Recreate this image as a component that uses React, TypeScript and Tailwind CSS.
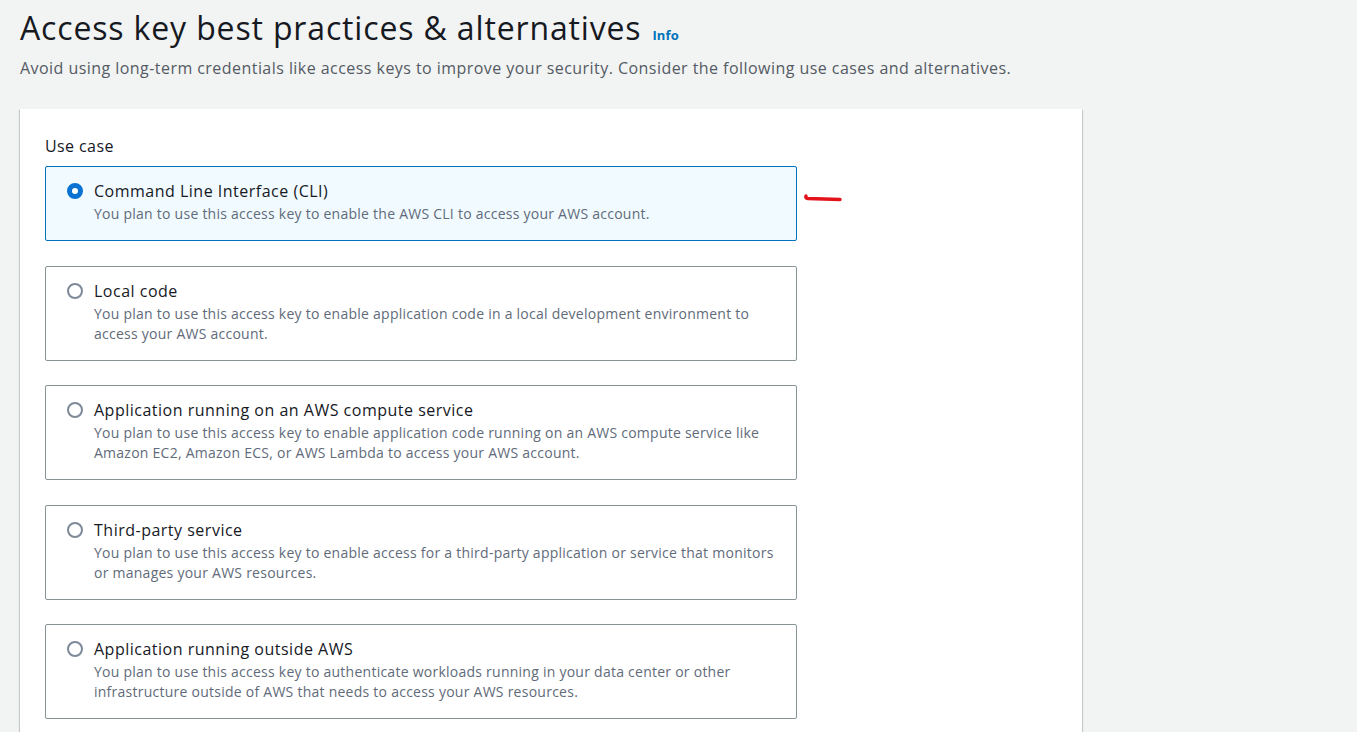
import { useState } from "react";

const options = [
  {
    id: "cli",
    title: "Command Line Interface (CLI)",
    desc: "You plan to use this access key to enable the AWS CLI to access your AWS account.",
  },
  {
    id: "local",
    title: "Local code",
    desc: "You plan to use this access key to enable application code in a local development environment to access your AWS account.",
  },
  {
    id: "compute",
    title: "Application running on an AWS compute service",
    desc: "You plan to use this access key to enable application code running on an AWS compute service like Amazon EC2, Amazon ECS, or AWS Lambda to access your AWS account.",
  },
  {
    id: "third",
    title: "Third-party service",
    desc: "You plan to use this access key to enable access for a third-party application or service that monitors or manages your AWS resources.",
  },
  {
    id: "outside",
    title: "Application running outside AWS",
    desc: "You plan to use this access key to authenticate workloads running in your data center or other infrastructure outside of AWS that needs to access your AWS resources.",
  },
];

function Radio({ checked }: { checked: boolean }) {
  return checked ? (
    <span className="mt-[3px] w-4 h-4 shrink-0 rounded-full border-[5px] border-[#0972d3] bg-white" />
  ) : (
    <span className="mt-[3px] w-4 h-4 shrink-0 rounded-full border-2 border-[#7d8998] bg-white" />
  );
}

export default function App() {
  const [selected, setSelected] = useState("cli");

  return (
    <div
      className="min-h-screen bg-[#f2f3f3] px-5 pt-[8px] text-[#16191f]"
      style={{ fontFamily: '"Open Sans", "Noto Sans", sans-serif' }}
    >
      <div className="flex items-end gap-[11px]">
        <h1 className="text-[32px] leading-[40px] font-normal tracking-[0.85px]">
          Access key best practices &amp; alternatives
        </h1>
        <a className="text-[13px] font-bold text-[#0073bb] mb-[3px] tracking-[0.1px]">Info</a>
      </div>
      <p className="mt-[9px] text-[16px] leading-[22px] text-[#545b64] tracking-[0.45px]">
        Avoid using long-term credentials like access keys to improve your security. Consider the following use cases and alternatives.
      </p>

      <div className="mt-[30px] w-[1062px] bg-white shadow-[0_1px_1px_0_rgba(0,28,36,0.3),1px_1px_1px_0_rgba(0,28,36,0.15),-1px_1px_1px_0_rgba(0,28,36,0.15)] px-[25px] pt-[26px] pb-6">
        <div className="text-[16px] leading-[22px] tracking-[0.4px]">Use case</div>
        <div className="relative mt-[9px] flex flex-col gap-[24.5px] w-[752px]">
          {options.map((o) => {
            const on = selected === o.id;
            return (
              <label
                key={o.id}
                onClick={() => setSelected(o.id)}
                className={
                  on
                    ? "flex gap-[11px] rounded-[2px] border border-[#0073bb] bg-[#f1faff] pl-[21px] pr-4 pt-[13px] pb-[16px] cursor-pointer"
                    : "flex gap-[11px] rounded-[2px] border border-[#879596] bg-white pl-[21px] pr-4 pt-[13px] pb-[16px] cursor-pointer"
                }
              >
                <Radio checked={on} />
                <div>
                  <div className="text-[16px] leading-[22px] tracking-[0.5px]">{o.title}</div>
                  <div className="mt-[2px] text-[14px] leading-[20px] text-[#5f6b7a] tracking-[0.25px]">{o.desc}</div>
                </div>
              </label>
            );
          })}
          <svg
            className="absolute left-[758px] top-[25px]"
            width="40"
            height="12"
            viewBox="0 0 40 12"
          >
            <path
              d="M3 5 Q2 7 5 7.5 Q20 8 37 8.5"
              fill="none"
              stroke="#e3121b"
              strokeWidth="3.4"
              strokeLinecap="round"
            />
          </svg>
        </div>
      </div>
    </div>
  );
}
